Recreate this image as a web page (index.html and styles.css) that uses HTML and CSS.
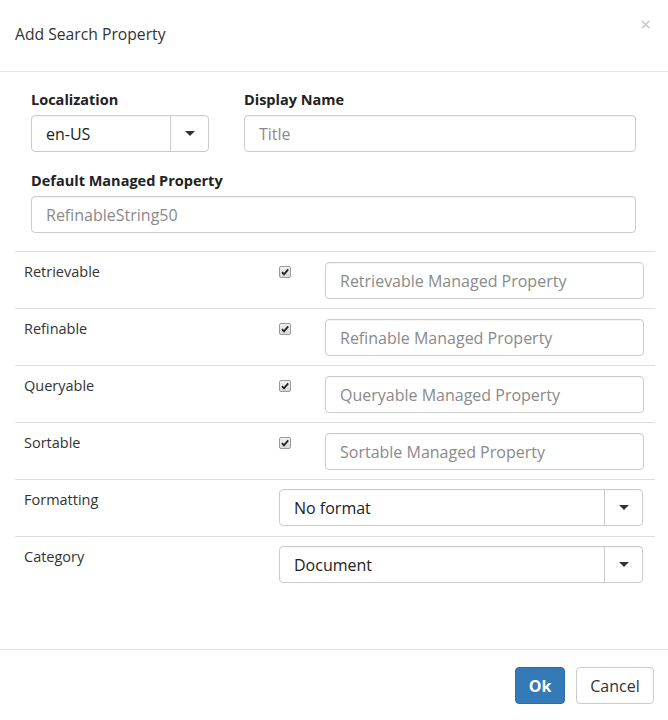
FILE: index.html
```html
<!DOCTYPE html>
<html>
<head>
<meta charset="utf-8">
<link rel="stylesheet" href="styles.css">
</head>
<body>
<div class="modal">
  <div class="modal-header">
    <h4 class="title">Add Search Property</h4>
    <span class="close">×</span>
  </div>
  <div class="modal-body">
    <div class="top-form">
      <div class="row">
        <div class="group loc">
          <label class="lbl">Localization</label>
          <div class="select small">
            <span class="val">en-US</span>
            <span class="caret-box"><span class="caret"></span></span>
          </div>
        </div>
        <div class="group name">
          <label class="lbl">Display Name</label>
          <div class="input"><span class="ph">Title</span></div>
        </div>
      </div>
      <div class="group full">
        <label class="lbl">Default Managed Property</label>
        <div class="input"><span class="ph">RefinableString50</span></div>
      </div>
    </div>
    <div class="table">
      <div class="trow">
        <div class="c-label">Retrievable</div>
        <div class="c-check"><span class="cb"><svg viewBox="0 0 12 12" width="12" height="12"><path d="M3 6.2 L5 8.4 L9.2 3.4" fill="none" stroke="#222" stroke-width="1.8"/></svg></span></div>
        <div class="c-input"><div class="input"><span class="ph">Retrievable Managed Property</span></div></div>
      </div>
      <div class="trow">
        <div class="c-label">Refinable</div>
        <div class="c-check"><span class="cb"><svg viewBox="0 0 12 12" width="12" height="12"><path d="M3 6.2 L5 8.4 L9.2 3.4" fill="none" stroke="#222" stroke-width="1.8"/></svg></span></div>
        <div class="c-input"><div class="input"><span class="ph">Refinable Managed Property</span></div></div>
      </div>
      <div class="trow">
        <div class="c-label">Queryable</div>
        <div class="c-check"><span class="cb"><svg viewBox="0 0 12 12" width="12" height="12"><path d="M3 6.2 L5 8.4 L9.2 3.4" fill="none" stroke="#222" stroke-width="1.8"/></svg></span></div>
        <div class="c-input"><div class="input"><span class="ph">Queryable Managed Property</span></div></div>
      </div>
      <div class="trow">
        <div class="c-label">Sortable</div>
        <div class="c-check"><span class="cb"><svg viewBox="0 0 12 12" width="12" height="12"><path d="M3 6.2 L5 8.4 L9.2 3.4" fill="none" stroke="#222" stroke-width="1.8"/></svg></span></div>
        <div class="c-input"><div class="input"><span class="ph">Sortable Managed Property</span></div></div>
      </div>
      <div class="trow">
        <div class="c-label">Formatting</div>
        <div class="c-wide">
          <div class="select">
            <span class="val">No format</span>
            <span class="caret-box"><span class="caret"></span></span>
          </div>
        </div>
      </div>
      <div class="trow last">
        <div class="c-label">Category</div>
        <div class="c-wide">
          <div class="select">
            <span class="val">Document</span>
            <span class="caret-box"><span class="caret"></span></span>
          </div>
        </div>
      </div>
    </div>
  </div>
  <div class="modal-footer">
    <button class="btn btn-primary">Ok</button>
    <button class="btn btn-default">Cancel</button>
  </div>
</div>
</body>
</html>
```
FILE: styles.css
```css
* { box-sizing: border-box; }
html, body { margin: 0; padding: 0; background: #fff; }
body {
  font-family: "Open Sans", "Liberation Sans", sans-serif;
  color: #333;
  width: 668px;
  height: 720px;
  overflow: hidden;
}
.modal { display: flex; flex-direction: column; height: 720px; }
.modal-header {
  height: 72px;
  border-bottom: 1px solid #e5e5e5;
  display: flex;
  justify-content: space-between;
  padding: 0 15px;
}
.title {
  margin: 0;
  font-weight: 400;
  font-size: 15.7px;
  line-height: 22px;
  padding-top: 23px;
  color: #333;
}
.close {
  color: #c4c4c4;
  font-size: 19px;
  line-height: 19px;
  padding-top: 15px;
  margin-right: 2px;
}
.modal-body {
  flex: 1;
  padding: 15px 13px 0 15px;
}
.top-form { padding: 0 19px 0 16px; }
.row { display: flex; gap: 35px; }
.group { display: flex; flex-direction: column; }
.loc { width: 178px; }
.name { flex: 1; }
.full { margin-top: 16px; }
.lbl {
  font-weight: 700;
  font-size: 14.5px;
  line-height: 20px;
  color: #222;
  height: 28px;
  padding-top: 3px;
}
.input, .select {
  height: 37px;
  border: 1px solid #ccc;
  border-radius: 4px;
  font-size: 16px;
  display: flex;
  align-items: center;
  background: #fff;
  box-shadow: inset 0 1px 1px rgba(0,0,0,0.04);
}
.input { padding: 0 14px; }
.ph { color: #8a8a8a; }
.select { padding: 0; }
.select .val { flex: 1; padding-left: 14px; color: #222; }
.caret-box {
  width: 38px;
  height: 100%;
  border-left: 1px solid #ccc;
  display: flex;
  align-items: center;
  justify-content: center;
}
.caret {
  width: 0; height: 0;
  border-left: 5px solid transparent;
  border-right: 5px solid transparent;
  border-top: 5px solid #333;
}
.table { margin-top: 18px; }
.trow {
  display: flex;
  height: 57px;
  border-top: 1px solid #ddd;
}
.c-label {
  width: 253px;
  padding: 10px 9px;
  font-size: 14.5px;
  line-height: 20px;
  color: #333;
}
.c-check {
  width: 48px;
  padding: 14px 0 0 11px;
}
.cb {
  display: block;
  width: 12px;
  height: 12px;
  border: 1px solid #9a9a9a;
  border-radius: 2px;
  background: linear-gradient(#f2f2f2, #d9d9d9);
  position: relative;
}
.cb svg { position: absolute; left: -1px; top: -1px; }
.c-input { flex: 1; padding: 10px 11px 0 9px; }
.c-wide { flex: 1; padding: 9px 12px 0 11px; }
.modal-footer {
  height: 71px;
  border-top: 1px solid #e5e5e5;
  display: flex;
  justify-content: flex-end;
  align-items: flex-start;
  padding: 17px 14px 0 0;
  gap: 11px;
}
.btn {
  height: 37px;
  border-radius: 4px;
  font-family: "Open Sans", "Liberation Sans", sans-serif;
  font-size: 16px;
  padding: 0 12px;
  border: 1px solid #ccc;
  background: #fff;
  color: #333;
}
.btn-primary {
  background: #337ab7;
  border-color: #2e6da4;
  color: #fff;
  font-weight: 700;
  width: 50px;
}
.btn-default { width: 78px; }
```
